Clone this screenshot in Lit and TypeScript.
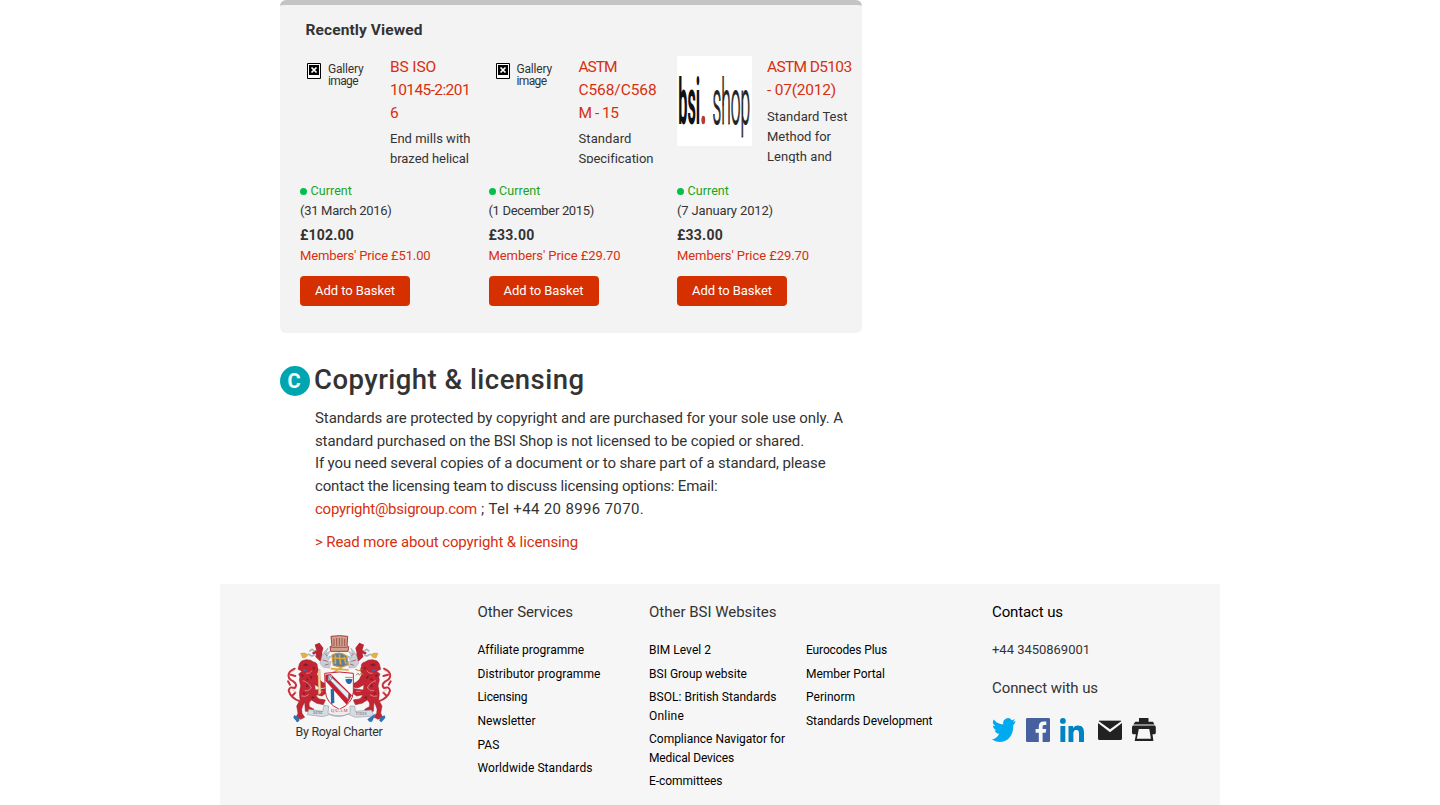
import { LitElement, html, css, svg } from "lit";
import { customElement, property } from "lit/decorators.js";

/** One line of text whose tracking is derived from its measured width. */
@customElement("fit-text")
class FitText extends LitElement {
  static styles = css`
    :host { display: inline-block; white-space: pre; }
  `;
  @property() text = "";
  @property({ type: Number }) width = 0;
  render() {
    return html`${this.text}`;
  }
  updated() {
    this.style.letterSpacing = "0px";
    let spacing = 0;
    for (let pass = 0; pass < 2; pass++) {
      const natural = this.getBoundingClientRect().width;
      spacing += (this.width - natural) / this.text.length;
      this.style.letterSpacing = `${spacing.toFixed(3)}px`;
    }
  }
}

type Line = [string, number];
const fit = ([text, width]: Line) => html`<fit-text .text=${text} .width=${width}></fit-text>`;
const rows = (lines: Line[]) => lines.map((l) => html`<div>${fit(l)}</div>`);

interface Product {
  logo?: boolean;
  title: Line[];
  desc: Line[];
  date: Line;
  price: Line;
  member: Line;
}

const products: Product[] = [
  {
    title: [["BS ISO", 46], ["10145-2:201", 80], ["6", 9]],
    desc: [["End mills with", 80.5], ["brazed helical", 79]],
    date: ["(31 March 2016)", 91.5],
    price: ["£102.00", 54],
    member: ["Members' Price £51.00", 130.5],
  },
  {
    title: [["ASTM", 38], ["C568/C568", 78], ["M - 15", 40]],
    desc: [["Standard", 53], ["Specification", 75]],
    date: ["(1 December 2015)", 105.5],
    price: ["£33.00", 46],
    member: ["Members' Price £29.70", 132],
  },
  {
    logo: true,
    title: [["ASTM D5103", 84.5], ["- 07(2012)", 69]],
    desc: [["Standard Test", 80.5], ["Method for", 64], ["Length and", 65]],
    date: ["(7 January 2012)", 96],
    price: ["£33.00", 46],
    member: ["Members' Price £29.70", 132],
  },
];

const services: Line[][] = [
  [["Affiliate programme", 106.5]],
  [["Distributor programme", 123]],
  [["Licensing", 50]],
  [["Newsletter", 58]],
  [["PAS", 22]],
  [["Worldwide Standards", 115]],
];
const sitesA: Line[][] = [
  [["BIM Level 2", 62]],
  [["BSI Group website", 98]],
  [["BSOL: British Standards", 127.5], ["Online", 35]],
  [["Compliance Navigator for", 136], ["Medical Devices", 85]],
  [["E-committees", 73.5]],
];
const sitesB: Line[][] = [
  [["Eurocodes Plus", 81]],
  [["Member Portal", 79]],
  [["Perinorm", 49]],
  [["Standards Development", 126.5]],
];

/* Left half of the crest's supporters; the right half is the same shape mirrored. */
const supporter = svg`
  <path fill="#c32533" stroke="#8d2430" stroke-width="1.5" d="M88 130 Q92 118 108 117 Q122 116 131 124 Q143 126 142 138 Q148 148 140 160 L148 176 Q156 186 164 188 L166 198 Q158 204 148 200 L134 192 L136 208 L164 204 L170 216 L156 226 L138 222 Q142 236 156 236 L166 238 L160 252 L140 248 L124 238 Q114 246 118 258 L132 266 L128 274 L106 272 L104 244 L98 256 Q92 266 96 278 L104 290 L92 296 L78 290 L84 278 L80 256 L90 238 Q86 214 92 196 L88 178 Q92 168 86 160 L96 152 L84 146 Z"/>
  <path fill="none" stroke="#c9303b" stroke-width="6" stroke-linecap="round" d="M90 242 Q62 232 56 210 Q58 196 74 202 Q84 192 70 182 Q52 174 56 160 Q60 150 74 144 M62 162 L76 166 M60 192 L54 182 M66 226 L76 216"/>
  <path fill="none" stroke="#e9a3a6" stroke-width="2" d="M98 180 Q116 184 124 202 Q114 214 104 210 M94 226 Q106 230 116 222 M126 150 Q120 160 108 158 M144 212 L158 212 M66 206 q8 4 12 12 M62 156 q6 -6 12 -6"/>
  <path fill="#7d1f2b" d="M98 134 l8 -6 l10 4 l-8 5z M118 164 l10 4 l-4 8z M110 188 l6 10 l-8 2z M126 226 l10 6 l-12 2z M92 160 l10 4 l-6 6z M128 138 l8 4 l-6 6z M98 214 l8 4 l-4 6z M110 172 l6 4 l-8 6z"/>
  <path fill="#2f6fb0" d="M100 144 l10 3 l-2 6 l-8 -4z M72 284 l14 6 l2 10 l-6 5 l-12 -14z"/>
  <path fill="#b92532" d="M134 72 L148 66 L160 82 L156 98 L162 116 L150 122 L136 108 L140 92 Z M142 96 l-12 6 l-4 -6 l12 -8z"/>
  <path fill="#e6b23c" stroke="#a77b32" d="M92 98 L104 97 L114 102 L108 110 L98 112 Z"/>
  <path fill="none" stroke="#aab4c0" stroke-width="5" d="M118 92 L126 86 L134 92 M114 100 L126 106 L134 102"/>
  <path fill="#c9cfd6" stroke="#6f7987" d="M156 104 Q164 90 174 82 L168 98 L180 92 L170 110 L184 106 L172 124 L184 122 L178 142 L160 140 L150 128 Z"/>
  <path fill="none" stroke="#a2334a" stroke-width="2" d="M164 98 l8 8 M158 118 l14 4 M164 134 l12 -4"/>
`;

const crest = svg`<svg class="crest" viewBox="48 40 320 270">
  ${supporter}
  <g transform="translate(416 0) scale(-1 1)">${supporter}</g>
  <path fill="#cfa390" stroke="#a83b3e" stroke-width="3" d="M183 47 Q208 43 233 47 L231 76 L236 78 L234 92 L182 92 L180 78 L186 76 Z"/>
  <path fill="none" stroke="#9c4142" stroke-width="2.5" d="M192 54 V76 M200 52 V76 M208 52 V76 M216 52 V76 M224 54 V76 M184 80 H232"/>
  <path fill="#5d7da0" stroke="#c8963a" stroke-width="4" d="M186 104 Q208 90 230 106 L234 132 L214 140 L190 134 Z"/>
  <path fill="none" stroke="#e0a83a" stroke-width="5" d="M190 112 L228 114 M196 104 V130 M208 102 L212 132 M222 108 L228 130 M182 144 L236 148 M188 156 L216 140"/>
  <path fill="#fafafa" stroke="#c12636" stroke-width="3" d="M164 158 Q208 150 250 158 L250 214 Q248 248 208 266 Q168 248 166 212 Z"/>
  <path fill="#c9202e" d="M166 162 L182 160 L246 224 L230 252 L166 180 Z"/>
  <path fill="#e9edf3" stroke="#7382a4" stroke-width="2" d="M180 166 L236 218 L234 236 L178 176 Z M176 164 l10 0 l-2 12 l-10 4z"/>
  <path fill="#2469a8" d="M182 206 L192 204 L193 246 L183 250 Z M226 176 Q237 172 247 176 Q246 190 237 190 Q228 190 226 176 Z"/>
  <path fill="none" stroke="#53657c" stroke-width="2" d="M225 170 H248 M185 198 L190 206"/>
  <path fill="#f4d7a0" stroke="#b77834" d="M144 150 L150 146 L153 218 L145 222 Z"/>
  <path fill="none" stroke="#b77834" stroke-width="3" d="M256 146 q10 8 20 0 M258 164 q8 -12 10 0 M270 162 q6 -12 8 0"/>
  <path fill="#d5dbe2" stroke="#808b99" stroke-width="1.5" d="M116 266 L158 272 L162 254 L176 256 L174 278 Q208 292 240 278 L240 256 L254 256 L256 272 L304 268 L312 286 L256 290 L234 280 Q208 294 178 282 L158 288 L112 282 Z"/>
  <path fill="#f3ebeb" d="M180 260 Q208 270 236 260 L238 276 Q208 288 178 278 Z"/>
  <text class="motto" x="183" y="275" textLength="50">QUAM</text>
  <text class="motto small" x="130" y="281" textLength="28">BENE</text>
  <text class="motto small" x="258" y="284" textLength="32">FIDES</text>
  <path fill="#2d73b1" d="M72 284 l12 4 l4 10 l-8 6z M292 296 L318 278 L306 303 L298 303 Z"/>
</svg>`;

@customElement("app-root")
class AppRoot extends LitElement {
  static styles = css`
    :host {
      display: block;
      width: 1440px;
      height: 805px;
      overflow: hidden;
      background: #fff;
      color: #333;
      font-family: Roboto, "Open Sans", sans-serif;
    }
    .page { width: 1000px; height: 805px; margin: 0 auto; display: flex; flex-direction: column; }
    .main { margin-left: 60px; width: 581.7px; height: 584px; flex: none; }
    .panel {
      box-sizing: border-box;
      height: 333px;
      border-top: 5px solid #c4c4c4;
      border-radius: 6px;
      background: #f3f3f3;
      padding: 13px 0 0 20px;
    }
    .panel-title { padding-left: 5.5px; font-size: 15.5px; font-weight: 700; line-height: 24px; }
    .products { display: grid; grid-template-columns: repeat(3, 188.5px); margin-top: 13px; }
    .top { display: flex; height: 108px; overflow: hidden; margin-right: 10px; }
    .thumb { width: 90px; flex: none; padding-top: 1px; }
    .missing { display: flex; gap: 7px; padding: 7px 0 0 7px; font-size: 12px; line-height: 12px; }
    .missing svg { width: 14px; height: 16px; flex: none; }
    .logo { display: block; width: 75px; height: 90px; }
    .logo-b { font-weight: 700; font-size: 64px; fill: #111; }
    .logo-s { font-weight: 300; font-size: 63px; fill: #222; stroke: #222; stroke-width: 1.2px; }
    .texts { padding-top: 1px; }
    .title { font-size: 15.5px; line-height: 23px; color: #d82f0e; }
    .desc { font-size: 13px; line-height: 20px; margin-top: 4px; }
    .desc.low { margin-top: 5px; }
    .info { padding-top: 18px; font-size: 13px; line-height: 20px; }
    .status { display: flex; align-items: center; gap: 3.5px; color: #19a319; font-size: 12.5px; }
    .dot { width: 7px; height: 7px; border-radius: 50%; background: #00c04b; }
    .price { font-size: 14px; font-weight: 700; margin-top: 4px; }
    .member { color: #d82f0e; margin-top: 1px; }
    .btn {
      display: flex; align-items: center; justify-content: center;
      width: 110px; height: 30px; margin-top: 10px;
      background: #d62f00; color: #fff; border-radius: 4px;
      font-size: 13px; font-weight: 400;
    }
    .heading { display: flex; gap: 4px; margin-top: 33px; height: 30px; align-items: center; }
    .badge {
      box-sizing: border-box; padding: 0 2px 1px 0;
      width: 30px; height: 30px; border-radius: 50%; background: #00a5b0; color: #fff;
      font-size: 20px; font-weight: 700; display: flex; align-items: center; justify-content: center;
    }
    .h1 { font-size: 27.5px; font-weight: 500; line-height: 30px; padding-bottom: 2px; }
    .copy { padding: 10.8px 0 0 35px; font-size: 15px; line-height: 22.75px; }
    .copy div { height: 22.75px; white-space: pre; }
    .red { color: #d82f0e; }
    .more { margin-top: 10px; }
    .footer {
      box-sizing: border-box; height: 221px; flex: none; background: #f6f6f6; padding-top: 16px;
      display: grid; grid-template-columns: 257.5px 171.5px 157px 186px 1fr;
    }
    .charter { padding: 33.5px 0 0 66px; font-size: 12.5px; line-height: 16px; }
    .crest { display: block; width: 106.7px; height: 90px; }
    .charter-label { padding-left: 9.5px; }
    .motto { font-family: "Liberation Serif", serif; font-size: 14px; fill: #b03b4a; }
    .small { font-size: 10px; fill: #4b5563; }
    .fh { font-size: 15px; line-height: 24px; height: 24px; }
    .dark { color: #000; }
    .list { margin-top: 17.3px; display: grid; gap: 5.2px; font-size: 12px; line-height: 18.4px; color: #000; }
    .tel { margin-top: 17px; font-size: 13px; line-height: 18px; }
    .connect { margin-top: 17px; }
    .social { display: flex; gap: 10px; margin-top: 18px; }
    .social svg { width: 24px; height: 24px; display: block; }
    .mail { margin-left: 4px; }
  `;

  thumb(p: Product) {
    return p.logo
      ? html`<svg class="logo" viewBox="0 0 75 90">
          <rect width="75" height="90" fill="#fff" />
          <text class="logo-b" transform="translate(1.3 68) scale(.255 1)">bsi</text>
          <ellipse cx="26.3" cy="64" rx="1.9" ry="4.2" fill="#b83a35" />
          <text class="logo-s" transform="translate(35.5 68) scale(.276 1)">shop</text>
        </svg>`
      : html`<div class="missing">
          <svg viewBox="0 0 14 16">
            <path fill="#fff" stroke="#000" d="M.5.5h13v15H.5z" />
            <path d="M2 2h10v10H2z" />
            <path d="M4.5 4.5l5 5m0-5l-5 5" stroke="#fff" stroke-width="1.7" />
          </svg>
          <div>${rows([["Gallery", 35.5], ["image", 30]])}</div>
        </div>`;
  }

  product(p: Product) {
    return html`<div>
      <div class="top">
        <div class="thumb">${this.thumb(p)}</div>
        <div class="texts">
          <div class="title">${rows(p.title)}</div>
          <div class="desc ${p.logo ? "low" : ""}">${rows(p.desc)}</div>
        </div>
      </div>
      <div class="info">
        <div class="status"><span class="dot"></span>${fit(["Current", 41.5])}</div>
        <div>${fit(p.date)}</div>
        <div class="price">${fit(p.price)}</div>
        <div class="member">${fit(p.member)}</div>
        <div class="btn">${fit(["Add to Basket", 80])}</div>
      </div>
    </div>`;
  }

  list(items: Line[][]) {
    return html`<div class="list">${items.map((i) => html`<div>${rows(i)}</div>`)}</div>`;
  }

  render() {
    return html`<div class="page">
      <div class="main">
        <div class="panel">
          <div class="panel-title">${fit(["Recently Viewed", 117])}</div>
          <div class="products">${products.map((p) => this.product(p))}</div>
        </div>
        <div class="heading">
          <span class="badge">C</span>
          <span class="h1">${fit(["Copyright & licensing", 270.5])}</span>
        </div>
        <div class="copy">
          ${rows([
            ["Standards are protected by copyright and are purchased for your sole use only. A", 528],
            ["standard purchased on the BSI Shop is not licensed to be copied or shared.", 489],
            ["If you need several copies of a document or to share part of a standard, please", 510.5],
            ["contact the licensing team to discuss licensing options: Email:", 402.5],
          ])}
          <div><span class="red">${fit(["copyright@bsigroup.com", 162])}</span>${fit([" ; Tel +44 20 8996 7070.", 167])}</div>
          <div class="more red">${fit(["> Read more about copyright & licensing", 263])}</div>
        </div>
      </div>
      <div class="footer">
        <div class="charter">
          ${crest}
          <div class="charter-label">${fit(["By Royal Charter", 87])}</div>
        </div>
        <div><div class="fh">${fit(["Other Services", 95.5])}</div>${this.list(services)}</div>
        <div><div class="fh">${fit(["Other BSI Websites", 127.5])}</div>${this.list(sitesA)}</div>
        <div><div class="fh"></div>${this.list(sitesB)}</div>
        <div>
          <div class="fh dark">${fit(["Contact us", 71])}</div>
          <div class="tel">${fit(["+44 3450869001", 98])}</div>
          <div class="fh connect">${fit(["Connect with us", 106])}</div>
          <div class="social">
            <svg viewBox="0 0 24 24"><path fill="#00aaf0" d="M23.6 2.9a9.6 9.6 0 0 1-2.8.8 4.9 4.9 0 0 0 2-2.7 9.6 9.6 0 0 1-3 1.2 4.8 4.8 0 0 0-8.4 4.4A13.6 13.6 0 0 1 1.7 1.6 4.8 4.8 0 0 0 3.2 8a4.7 4.7 0 0 1-2.2-.6 4.8 4.8 0 0 0 3.8 4.8 4.8 4.8 0 0 1-2.1.1 4.8 4.8 0 0 0 4.4 3.5A9.8 9.8 0 0 1 0 21.5 13.7 13.7 0 0 0 7.5 24C16.5 24 21.7 16.3 21.2 7.5a9.5 9.5 0 0 0 2.4-4.6z" /></svg>
            <svg viewBox="0 0 24 24"><path fill="#4660a0" d="M1.3 0h21.4Q24 0 24 1.3v21.4Q24 24 22.7 24H16.6v-9.3h3.1l.5-3.6h-3.6V8.8c0-1 .3-1.8 1.8-1.8h1.9V3.7c-.3 0-1.5-.1-2.8-.1-2.8 0-4.7 1.7-4.7 4.8v2.7H9.6v3.6h3.2V24H1.3Q0 24 0 22.7V1.3Q0 0 1.3 0z" /></svg>
            <svg viewBox="0 0 24 24"><path fill="#0083c1" d="M.4 8h4.9v16H.4zM2.9 0a2.9 2.9 0 1 1 0 5.8 2.9 2.9 0 0 1 0-5.8zM8.5 8h4.7v2.2c.7-1.3 2.3-2.6 4.7-2.6 5 0 6.1 3.2 6.1 7.5V24h-5v-7.9c0-1.9 0-4.2-2.6-4.2s-3 2-3 4.1v8H8.5z" /></svg>
            <svg class="mail" viewBox="0 0 24 24"><path fill="#999" d="M1 2.2h22v1H1z" /><path fill="#222" d="M.5 3h23L12 11.3zM0 5l12 9.2L24 5v15.5Q24 22 22.5 22h-21Q0 22 0 20.5z" /></svg>
            <svg viewBox="0 0 24 24"><path fill="#222" fill-rule="evenodd" d="M7 0h9.5v3.8H21l1.4 2.7H1.3l2-2.7H7zM.8 7.5h22.2l.8 1.5v6.2l-1 1.1h-2.3L21.4 23H2.7l1.2-6.7H1l-1-1.1V9zM6.8 11L4.9 20.8h14L17.3 11z" /></svg>
          </div>
        </div>
      </div>
    </div>`;
  }
}
